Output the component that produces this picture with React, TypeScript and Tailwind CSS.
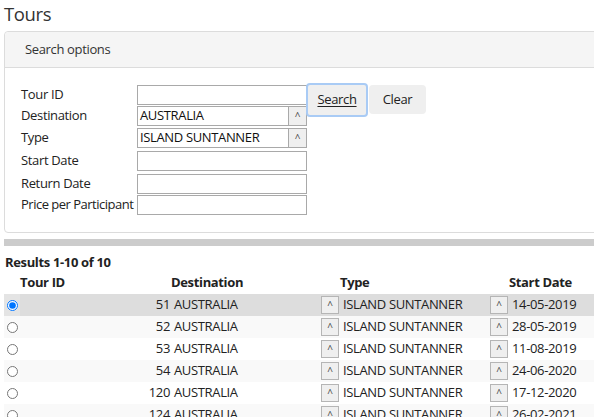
import React from "react";

const font = { fontFamily: '"Open Sans", "Noto Sans", sans-serif' };

function Caret() {
  return (
    <span className="flex h-full w-[18px] shrink-0 items-center justify-center border-l border-[#a9a9a9] bg-[#efefef] text-[10px] leading-none text-[#444]">
      ^
    </span>
  );
}

function CaretBox() {
  return (
    <span className="flex h-[18px] w-[18px] shrink-0 items-center justify-center border border-[#b5b5b5] bg-[#efefef] text-[10px] leading-none text-[#444]">
      ^
    </span>
  );
}

const rows = [
  { id: 51, date: "14-05-2019" },
  { id: 52, date: "28-05-2019" },
  { id: 53, date: "11-08-2019" },
  { id: 54, date: "24-06-2020" },
  { id: 120, date: "17-12-2020" },
  { id: 124, date: "26-02-2021" },
];

export default function App() {
  return (
    <div
      className="h-[417px] w-[594px] overflow-hidden bg-white text-[13px] tracking-[-0.35px] text-[#222]"
      style={font}
    >
      <h1 className="ml-[4px] pt-[1px] text-[18.5px] leading-[26px] text-[#333]">Tours</h1>

      <div className="ml-[4px] mt-[4px] w-[620px] rounded-[4px] border border-[#dcdcdc]">
        <div className="flex h-[36px] items-center rounded-t-[4px] border-b border-[#dcdcdc] bg-[#f5f5f5] pl-[20px] pt-[1px] text-[#333]">
          Search options
        </div>
        <div className="flex pb-[17px] pl-[16px] pt-[17px]">
          <div className="flex flex-col">
            <div className="flex h-[20px] items-center">
              <span className="w-[116px]">Tour ID</span>
              <div className="h-[20px] w-[170px] border border-[#a9a9a9]" />
            </div>
            <div className="mt-[1px] flex h-[20px] items-center">
              <span className="w-[116px]">Destination</span>
              <div className="flex h-[20px] w-[170px] items-center border border-[#a9a9a9]">
                <span className="flex-1 pl-[2px] text-[#111]">AUSTRALIA</span>
                <Caret />
              </div>
            </div>
            <div className="mt-[2px] flex h-[20px] items-center">
              <span className="w-[116px]">Type</span>
              <div className="flex h-[20px] w-[170px] items-center border border-[#a9a9a9]">
                <span className="flex-1 pl-[2px] text-[#111]">ISLAND SUNTANNER</span>
                <Caret />
              </div>
            </div>
            <div className="mt-[3px] flex h-[20px] items-center">
              <span className="w-[116px]">Start Date</span>
              <div className="h-[20px] w-[170px] border border-[#a9a9a9]" />
            </div>
            <div className="mt-[3px] flex h-[20px] items-center">
              <span className="w-[116px]">Return Date</span>
              <div className="h-[20px] w-[170px] border border-[#a9a9a9]" />
            </div>
            <div className="mt-[1px] flex h-[20px] items-center">
              <span className="w-[116px] whitespace-nowrap tracking-[-0.5px]">Price per Participant</span>
              <div className="h-[20px] w-[170px] border border-[#a9a9a9]" />
            </div>
          </div>
          <div className="ml-[-1px] mt-[-2px] flex items-start">
            <button className="h-[34px] w-[62px] rounded-[4px] border-2 border-[#a9cbf5] bg-[#efefef] text-[13px] text-[#222] underline underline-offset-2">
              Search
            </button>
            <button className="ml-[1px] mt-[2px] h-[29px] w-[57px] rounded-[4px] bg-[#efefef] text-[13px] text-[#222]">
              Clear
            </button>
          </div>
        </div>
      </div>

      <div className="ml-[4px] mt-[6px] h-[7px] w-[600px] bg-[#cccccc]" />

      <div className="ml-[5px] mt-[8px] font-bold leading-[16px]">Results 1-10 of 10</div>

      <div className="ml-[4px] mt-[2px] flex h-[22px] items-center font-bold">
        <span className="w-[167px] pl-[16px]">Tour ID</span>
        <span className="w-[169px]">Destination</span>
        <span className="w-[169px]">Type</span>
        <span>Start Date</span>
      </div>

      <div className="ml-[4px] flex flex-col">
        {rows.map((r, i) => (
          <div
            key={r.id}
            className={`flex h-[22px] items-center ${
              i === 0 ? "bg-[#dddddd]" : i % 2 === 1 ? "bg-[#f9f9f9]" : "bg-white"
            }`}
          >
            <span
              className={`flex h-full w-[16px] items-center justify-center ${
                i === 0 ? "bg-[#e4e4e4]" : ""
              }`}
            >
              <input
                type="radio"
                name="tour"
                defaultChecked={i === 0}
                className="m-0 h-[11px] w-[11px]"
              />
            </span>
            <span className="w-[151px] pr-[1px] text-right">{r.id}</span>
            <span className="w-[150px] pl-[3px]">AUSTRALIA</span>
            <span className="flex w-[169px] items-center">
              <CaretBox />
              <span className="pl-[4px]">ISLAND SUNTANNER</span>
            </span>
            <span className="flex items-center">
              <CaretBox />
              <span className="pl-[4px]">{r.date}</span>
            </span>
          </div>
        ))}
      </div>
    </div>
  );
}
